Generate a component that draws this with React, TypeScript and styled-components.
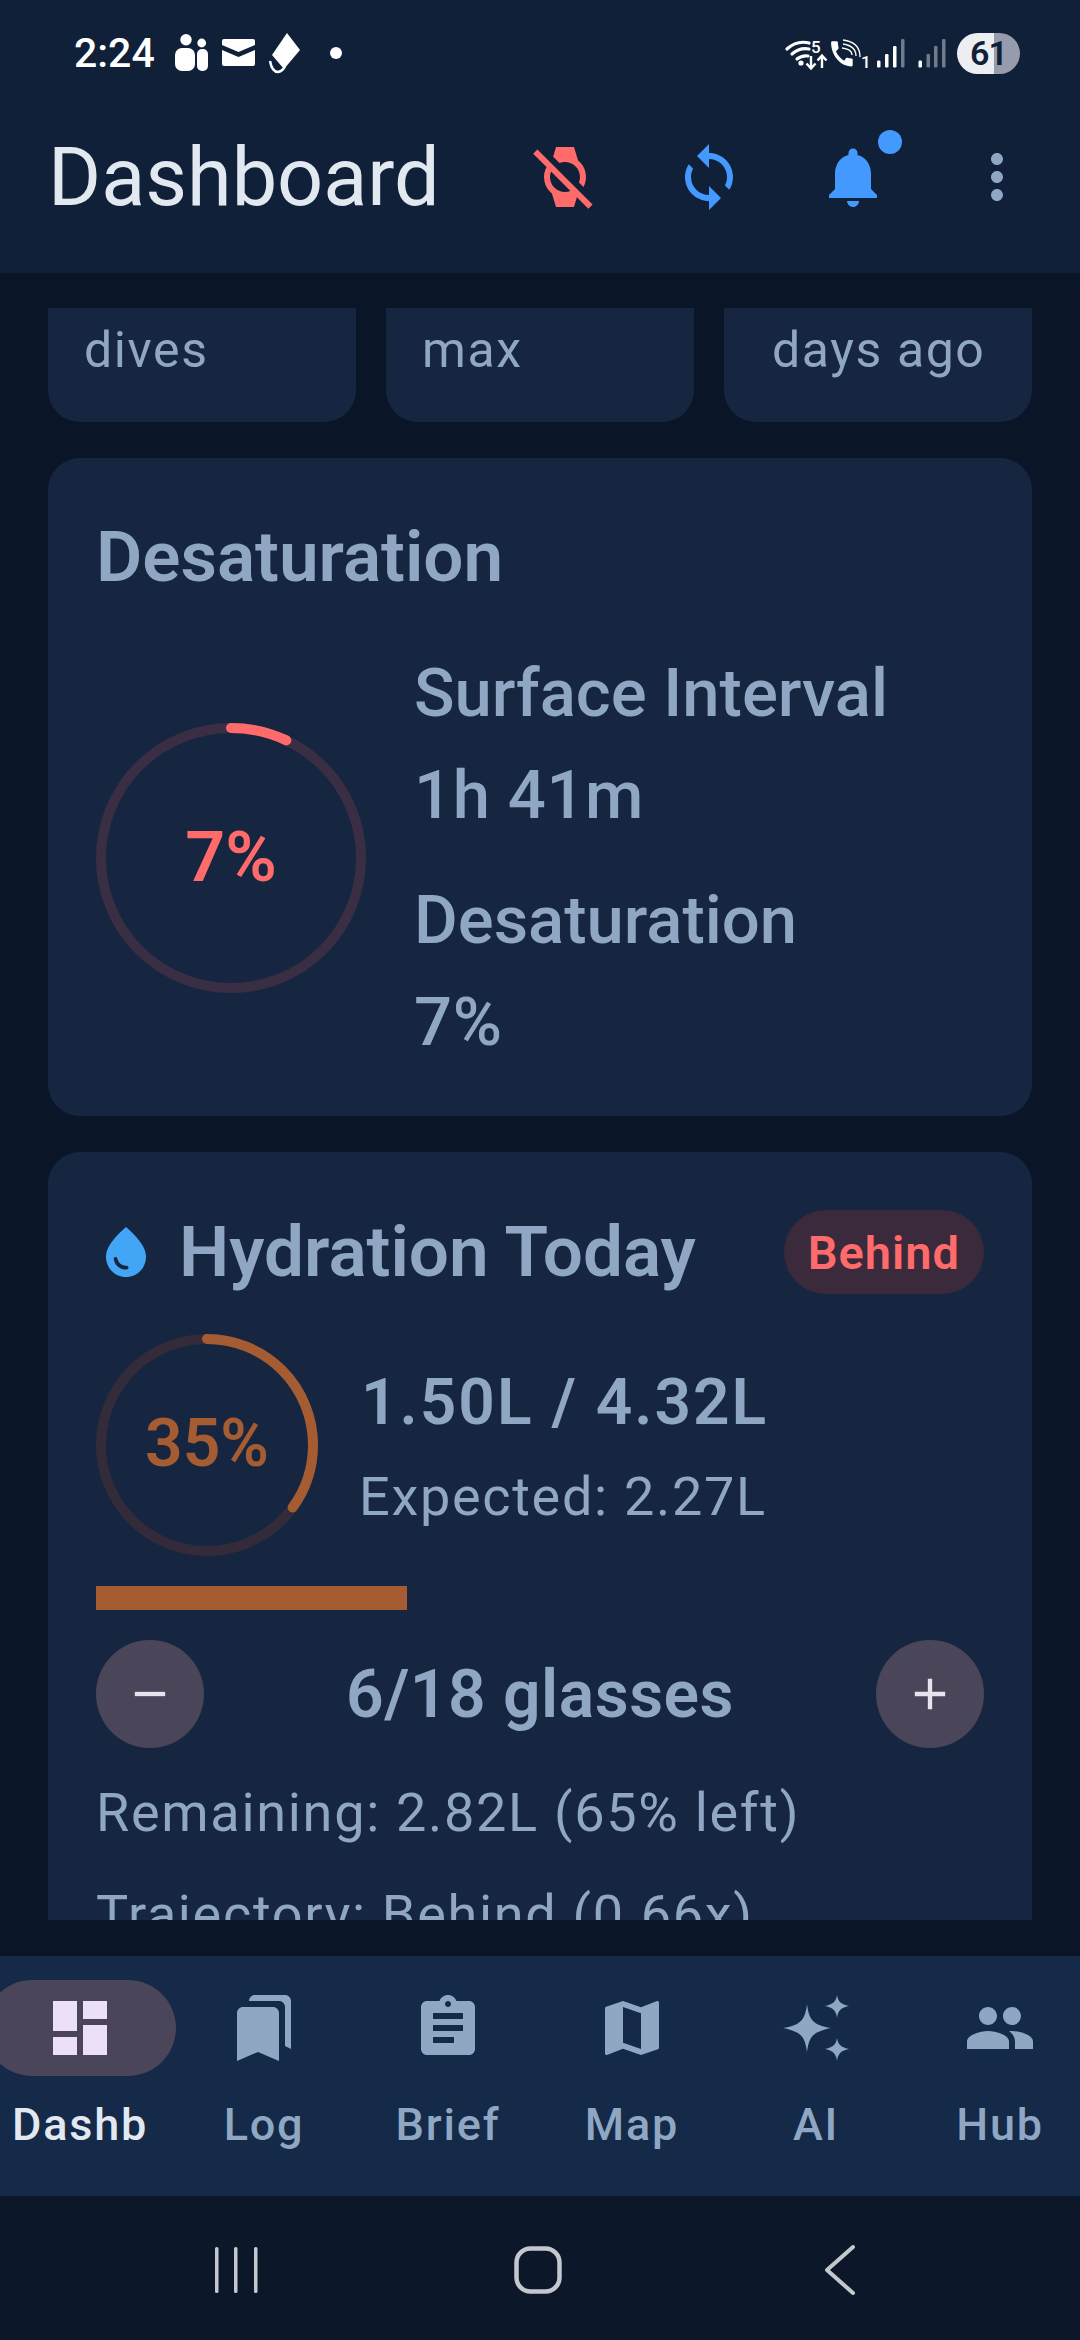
import React from "react";
import styled, { createGlobalStyle } from "styled-components";
import {
  MdDashboard, MdBookmarks, MdAssignment, MdMap, MdPeople, MdWaterDrop,
  MdSync, MdNotifications, MdMoreVert, MdWatchOff, MdRemove, MdAdd,
} from "react-icons/md";

const Global = createGlobalStyle`
  html, body { margin: 0; padding: 0; background: #0a1628; }
  body { font-family: Roboto, "Noto Sans", sans-serif; }
  * { box-sizing: border-box; }
`;

const Screen = styled.div`
  width: 1080px; height: 2340px; display: flex; flex-direction: column; overflow: hidden; background: #0a1628;
`;
const Header = styled.header`
  height: 273px; background: #0f2038; display: flex; flex-direction: column; flex: none;
`;
const StatusBar = styled.div`
  height: 106px; flex: none; display: flex; align-items: center; justify-content: space-between; padding: 0 60px 0 74px; color: #fff;
`;
const StatusGroup = styled.div`
  display: flex; align-items: center;
`;
const Clock = styled.span`
  font-size: 41px; font-weight: 500; margin-right: 20px;
`;
const StatusDot = styled.span`
  width: 12px; height: 12px; border-radius: 50%; background: #fff; margin-left: 27px;
`;
const TitleBar = styled.div`
  display: flex; align-items: center; height: 142px; padding-left: 48px; flex: none;
`;
const Title = styled.h1`
  margin: 0; font-size: 81px; font-weight: 400; color: #e2e8f0; flex: none; width: 445px;
`;
const ActionSlot = styled.div`
  position: relative; width: 144px; height: 96px; display: flex; align-items: center; justify-content: center; flex: none;
`;
const Dot = styled.span`
  position: absolute; width: 24px; height: 24px; border-radius: 50%; background: #4499ff; top: 1px; right: 23px;
`;
const Content = styled.main`
  flex: 1; min-height: 0; padding: 35px 0 36px; display: flex;
`;
const Scroll = styled.div`
  flex: 1; min-width: 0; overflow: hidden; padding: 0 48px;
`;
const Inner = styled.div`
  margin-top: -100px; display: flex; flex-direction: column; gap: 36px;
`;
const Stats = styled.div`
  display: grid; grid-template-columns: repeat(3, 1fr); gap: 30px;
`;
const StatCard = styled.div<{ $pad: number }>`
  height: 214px; background: #172640; border-radius: 32px; padding: 112px 0 0 ${p => p.$pad}px;
  font-size: 50px; line-height: 60px; color: #8fa7c2; letter-spacing: 1.6px;
`;
const Card = styled.section`
  background: #172640; border-radius: 32px; padding: 57px 48px 52px;
`;
const CardTitle = styled.h2`
  margin: 0; font-size: 71px; line-height: 84px; font-weight: 600; color: #8fa7c2;
`;
const DesatBody = styled.div`
  display: flex; align-items: center; gap: 48px; margin-top: 52px;
`;
const RingBox = styled.div<{ $size: number }>`
  position: relative; width: ${p => p.$size}px; height: ${p => p.$size}px; flex: none;
  display: flex; align-items: center; justify-content: center;
`;
const RingSvg = styled.svg`
  position: absolute; inset: 0;
`;
const RingText = styled.span<{ $size: number; $color: string }>`
  font-size: ${p => p.$size}px; line-height: 1; padding-bottom: 2px; font-weight: 600; color: ${p => p.$color};
`;
const DesatInfo = styled.div`
  display: flex; flex-direction: column;
`;
const Label = styled.div`
  font-size: 67px; line-height: 84px; font-weight: 500; color: #8fa7c2;
`;
const Value = styled.div<{ $gap?: number }>`
  font-size: 67px; line-height: 84px; font-weight: 500; color: #8fa7c2; margin-top: 18px; margin-bottom: ${p => p.$gap ?? 0}px;
  letter-spacing: 0.6px;
`;
const HydHead = styled.div`
  display: flex; align-items: center; justify-content: space-between; height: 84px; margin-top: 1px;
`;
const HydTitleWrap = styled.div`
  display: flex; align-items: center; gap: 23px;
`;
const Badge = styled.div`
  height: 84px; padding: 0 24px; border-radius: 42px; background: #3a2a3c; color: #ff6b6b;
  font-size: 47px; font-weight: 600; display: flex; align-items: center; letter-spacing: 1px;
`;
const HydRow = styled.div`
  display: flex; align-items: center; gap: 43px; margin-top: 40px;
`;
const HydInfo = styled.div`
  display: flex; flex-direction: column; gap: 28px; padding-top: 4px;
`;
const Amount = styled.div`
  font-size: 64px; line-height: 72px; font-weight: 600; color: #8fa7c2; letter-spacing: 2px;
`;
const Expected = styled.div`
  font-size: 54px; line-height: 60px; color: #8fa7c2; letter-spacing: 1.7px; margin-left: -2px;
`;
const Bar = styled.div`
  height: 24px; margin-top: 30px;
`;
const BarFill = styled.div`
  height: 100%; background: #a65c32;
`;
const Stepper = styled.div`
  display: flex; align-items: center; justify-content: space-between; margin-top: 30px;
`;
const RoundBtn = styled.div`
  width: 108px; height: 108px; border-radius: 50%; background: #4a4558; color: #e8e4ee;
  display: flex; align-items: center; justify-content: center;
`;
const Glasses = styled.div`
  font-size: 66px; font-weight: 600; color: #8fa7c2; letter-spacing: 0.5px;
`;
const Line = styled.div`
  font-size: 54px; line-height: 60px; color: #8fa7c2; letter-spacing: 1.7px; margin-top: 35px;
  & + & { margin-top: 42px; }
`;
const Nav = styled.nav`
  height: 240px; background: #152949; flex: none; display: grid; grid-template-columns: repeat(6, 184px);
  justify-content: center; overflow: hidden;
`;
const NavItem = styled.div<{ $active?: boolean }>`
  display: flex; flex-direction: column; align-items: center; padding-top: 24px; color: ${p => p.$active ? "#e2e8f0" : "#8fa7c2"};
`;
const NavPill = styled.div<{ $active?: boolean }>`
  width: 192px; height: 96px; flex: none; border-radius: 48px; display: flex; align-items: center; justify-content: center;
  background: ${p => p.$active ? "#4a4558" : "transparent"}; color: ${p => p.$active ? "#ebe0f8" : "#8fa7c2"};
`;
const NavLabel = styled.div`
  font-size: 45px; line-height: 52px; font-weight: 500; margin-top: 23px; letter-spacing: 1.8px;
`;
const SysBar = styled.div`
  height: 144px; flex: none; background: #0c1829; display: grid; grid-template-columns: repeat(3, 302px);
  justify-content: center; justify-items: center; align-items: center; padding: 4px 5px 0 0;
`;
const BatteryPill = styled.div`
  width: 63px; height: 41px; border-radius: 21px; background: linear-gradient(90deg, #eceef2 59%, #969cab 59%);
  color: #0f2038; font-size: 34px; font-weight: 600; letter-spacing: -1px; display: flex; align-items: center; justify-content: center;
`;

const Ring = ({ size, stroke, pct, color, track }: { size: number; stroke: number; pct: number; color: string; track: string }) => {
  const r = (size - stroke) / 2;
  const c = 2 * Math.PI * r;
  return (
    <RingSvg width={size} height={size} viewBox={`0 0 ${size} ${size}`}>
      <circle cx={size / 2} cy={size / 2} r={r} fill="none" stroke={track} strokeWidth={stroke} />
      <circle
        cx={size / 2} cy={size / 2} r={r} fill="none" stroke={color} strokeWidth={stroke} strokeLinecap="round"
        strokeDasharray={`${c * pct} ${c}`} transform={`rotate(-90 ${size / 2} ${size / 2})`}
      />
    </RingSvg>
  );
};

const Sparkles = () => (
  <svg width="66" height="66" viewBox="0 0 66 66" fill="#8fa7c2">
    <path d="M24 9 C26 24 29 30 48 33 C29 37 26 42 24 57 C22 42 19 37 0 33 C19 30 22 24 24 9Z" />
    <path d="M54 0 C55 6 57 9 66 11 C57 13 55 16 54 23 C53 16 51 13 42 11 C51 9 53 6 54 0Z" />
    <path d="M54 43 C55 49 57 52 66 54 C57 56 55 59 54 66 C53 59 51 56 42 54 C51 52 53 49 54 43Z" />
  </svg>
);

const StatusLeft = () => (
  <StatusGroup>
    <Clock>2:24</Clock>
    <svg width="128" height="44" viewBox="0 0 128 44" fill="#fff">
      <circle cx="11" cy="8.7" r="5.7" />
      <rect x="0" y="17" width="20" height="23" rx="7" />
      <circle cx="26.7" cy="12" r="4.4" />
      <rect x="22" y="18" width="11" height="22" rx="5" />
      <path d="M47 10 Q47 8 49 8 H78 Q80 8 80 10 V14 L63.5 21 L47 14Z" />
      <path d="M47 19 L63.5 26 L80 19 V33 Q80 35 78 35 H49 Q47 35 47 33Z" />
      <path d="M112 2 L125 19 L109 38 L97 24Z" />
      <path d="M95 30 Q97 41 103 41 Q108 40 110 35" fill="none" stroke="#fff" strokeWidth="2.5" />
    </svg>
    <StatusDot />
  </StatusGroup>
);

const StatusRight = () => (
  <StatusGroup>
    <svg width="172" height="44" viewBox="0 0 172 44">
      <g fill="none" stroke="#fff" strokeWidth="3.2" strokeLinecap="round">
        <path d="M2 18 Q12 9 24 12" />
        <path d="M7 23 Q15 16 24 18" />
        <path d="M12 28 Q17 24 23 25" />
      </g>
      <circle cx="16" cy="32" r="2.6" fill="#fff" />
      <text x="26" y="22" fontSize="17" fontWeight="500" fontFamily="Roboto" fill="#fff">5</text>
      <path d="M26 25 V37 M21.5 32.5 L26 37.5 L30.5 32.5 M37 37 V25 M32.5 29.5 L37 24.5 L41.5 29.5" fill="none" stroke="#fff" strokeWidth="2.4" />
      <path
        transform="translate(42.5 6) scale(1.2 1.4)" fill="#fff"
        d="M20.01 15.38c-1.23 0-2.42-.2-3.53-.56-.35-.12-.74-.03-1.01.24l-1.57 1.97c-2.83-1.35-5.48-3.9-6.89-6.83l1.95-1.66c.27-.28.35-.67.24-1.02-.37-1.11-.56-2.3-.56-3.53 0-.54-.45-.99-.99-.99H4.19C3.65 3 3 3.24 3 3.99 3 13.28 10.73 21 20.01 21c.71 0 .99-.63.99-1.18v-3.45c0-.54-.45-.99-.99-.99z"
      />
      <g fill="none" stroke="#fff" strokeWidth="1.3">
        <path d="M58 9 Q75 11 75 26" /><path d="M58 13 Q71 15 71 25" /><path d="M57 17 Q67 18 67 24" />
      </g>
      <text x="76" y="37" fontSize="17" fontWeight="500" fontFamily="Roboto" fill="#fff">1</text>
      <g fill="#fff">
        <rect x="92" y="29.5" width="3.5" height="7" rx="1.2" />
        <rect x="100" y="23" width="3.5" height="13.5" rx="1.2" />
        <rect x="108" y="15" width="3.5" height="21.5" rx="1.2" />
        <rect x="133.5" y="29.5" width="3.5" height="7" rx="1.2" />
      </g>
      <g fill="#6f7a8a">
        <rect x="116" y="8" width="3.5" height="28.5" rx="1.2" />
        <rect x="141.5" y="23" width="3.5" height="13.5" rx="1.2" />
        <rect x="149" y="15" width="3.5" height="21.5" rx="1.2" />
        <rect x="157" y="8" width="3.5" height="28.5" rx="1.2" />
      </g>
    </svg>
    <BatteryPill>61</BatteryPill>
  </StatusGroup>
);

const navItems = [
  { label: "Dashb", icon: <MdDashboard size={72} />, active: true },
  { label: "Log", icon: <MdBookmarks size={72} /> },
  { label: "Brief", icon: <MdAssignment size={72} /> },
  { label: "Map", icon: <MdMap size={72} /> },
  { label: "AI", icon: <Sparkles /> },
  { label: "Hub", icon: <MdPeople size={72} /> },
];

export default function App() {
  return (
    <Screen>
      <Global />
      <Header>
        <StatusBar><StatusLeft /><StatusRight /></StatusBar>
        <TitleBar>
          <Title>Dashboard</Title>
          <ActionSlot><MdWatchOff size={72} color="#ff6b6b" /></ActionSlot>
          <ActionSlot><MdSync size={72} color="#4499ff" /></ActionSlot>
          <ActionSlot><MdNotifications size={72} color="#4499ff" /><Dot /></ActionSlot>
          <ActionSlot><MdMoreVert size={72} color="#8fa7c2" /></ActionSlot>
        </TitleBar>
      </Header>
      <Content>
        <Scroll>
          <Inner>
            <Stats>
              <StatCard $pad={36}>dives</StatCard>
              <StatCard $pad={36}>max</StatCard>
              <StatCard $pad={48}>days ago</StatCard>
            </Stats>
            <Card>
              <CardTitle>Desaturation</CardTitle>
              <DesatBody>
                <RingBox $size={270}>
                  <Ring size={270} stroke={10} pct={0.07} color="#ff6b6b" track="#3a2e44" />
                  <RingText $size={70} $color="#ff6b6b">7%</RingText>
                </RingBox>
                <DesatInfo>
                  <Label>Surface Interval</Label>
                  <Value $gap={41}>1h 41m</Value>
                  <Label>Desaturation</Label>
                  <Value>7%</Value>
                </DesatInfo>
              </DesatBody>
            </Card>
            <Card>
              <HydHead>
                <HydTitleWrap>
                  <MdWaterDrop size={60} color="#42a5f5" />
                  <CardTitle>Hydration Today</CardTitle>
                </HydTitleWrap>
                <Badge>Behind</Badge>
              </HydHead>
              <HydRow>
                <RingBox $size={222}>
                  <Ring size={222} stroke={10} pct={0.35} color="#a65c32" track="#332b3a" />
                  <RingText $size={66} $color="#a65c32">35%</RingText>
                </RingBox>
                <HydInfo>
                  <Amount>1.50L / 4.32L</Amount>
                  <Expected>Expected: 2.27L</Expected>
                </HydInfo>
              </HydRow>
              <Bar><BarFill style={{ width: "35%" }} /></Bar>
              <Stepper>
                <RoundBtn><MdRemove size={52} /></RoundBtn>
                <Glasses>6/18 glasses</Glasses>
                <RoundBtn><MdAdd size={52} /></RoundBtn>
              </Stepper>
              <Line>Remaining: 2.82L (65% left)</Line>
              <Line>Trajectory: Behind (0.66x)</Line>
            </Card>
          </Inner>
        </Scroll>
      </Content>
      <Nav>
        {navItems.map(n => (
          <NavItem key={n.label} $active={n.active}>
            <NavPill $active={n.active}>{n.icon}</NavPill>
            <NavLabel>{n.label}</NavLabel>
          </NavItem>
        ))}
      </Nav>
      <SysBar>
        <svg width="46" height="46" viewBox="0 0 46 46" fill="#c4c8ce">
          <rect x="2" y="0" width="3.5" height="46" rx="1.5" /><rect x="21" y="0" width="3.5" height="46" rx="1.5" /><rect x="41" y="0" width="3.5" height="46" rx="1.5" />
        </svg>
        <svg width="48" height="48" viewBox="0 0 48 48"><rect x="2.5" y="2.5" width="43" height="43" rx="14" fill="none" stroke="#c4c8ce" strokeWidth="4.5" /></svg>
        <svg width="32" height="50" viewBox="0 0 32 50"><path d="M29 2 L3 25 L29 48" fill="none" stroke="#c4c8ce" strokeWidth="4" strokeLinecap="round" strokeLinejoin="round" /></svg>
      </SysBar>
    </Screen>
  );
}
